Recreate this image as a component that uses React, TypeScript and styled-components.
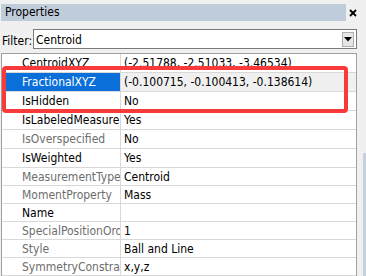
import React from 'react'
import styled, { createGlobalStyle } from 'styled-components'

type Prop = {
  name: string
  value: string
  muted?: boolean
  selected?: boolean
}

const props: Prop[] = [
  { name: 'CentroidXYZ', value: '(-2.51788, -2.51033, -3.46534)' },
  { name: 'FractionalXYZ', value: '(-0.100715, -0.100413, -0.138614)', selected: true },
  { name: 'IsHidden', value: 'No' },
  { name: 'IsLabeledMeasure', value: 'Yes' },
  { name: 'IsOverspecified', value: 'No', muted: true },
  { name: 'IsWeighted', value: 'Yes' },
  { name: 'MeasurementType', value: 'Centroid', muted: true },
  { name: 'MomentProperty', value: 'Mass', muted: true },
  { name: 'Name', value: '' },
  { name: 'SpecialPositionOrder', value: '1', muted: true },
  { name: 'Style', value: 'Ball and Line', muted: true },
  { name: 'SymmetryConstraint', value: 'x,y,z', muted: true },
]

export default function App() {
  return (
    <>
      <GlobalStyle />
      <Window>
        <Panel>
          <TitleBar>
            <TitleText>Properties</TitleText>
            <CloseButton aria-label="close">
              <svg width="8" height="8" viewBox="0 0 8 8">
                <path d="M1 1 L7 7 M7 1 L1 7" stroke="#000" strokeWidth="1.8" />
              </svg>
            </CloseButton>
          </TitleBar>

          <FilterRow>
            <FilterLabel>Filter:</FilterLabel>
            <Combo>
              <ComboText>Centroid</ComboText>
              <DropButton>
                <svg width="8" height="5" viewBox="0 0 8 5">
                  <path d="M0 0 H8 L4 4.5 Z" fill="#000" />
                </svg>
              </DropButton>
            </Combo>
          </FilterRow>

          <Grid>
            {props.map((p, i) => (
              <Row key={p.name} $h={i < 6 ? 19 : 18}>
                <NameCell $muted={p.muted} $selected={p.selected}>
                  {p.name}
                </NameCell>
                <ValueCell $selected={p.selected}>{p.value}</ValueCell>
              </Row>
            ))}
            <Highlight />
          </Grid>
        </Panel>
        <SideStrip>
          <SideBlock />
        </SideStrip>
      </Window>
    </>
  )
}

const GlobalStyle = createGlobalStyle`
  html, body {
    margin: 0;
    padding: 0;
    background: #f0f0f0;
    font-family: "DejaVu Sans Condensed", "DejaVu Sans", "Liberation Sans", sans-serif;
    font-size: 12px;
    color: #000;
  }
`
const Window = styled.div`
  display: flex;
  width: 366px;
  height: 276px;
  overflow: hidden;
`
const Panel = styled.div`
  display: flex;
  flex-direction: column;
  width: 360px;
`
const TitleBar = styled.div`
  display: flex;
  align-items: center;
  margin-top: 4px;
  height: 17px;
`
const TitleText = styled.div`
  flex: 1;
  height: 17px;
  line-height: 17px;
  margin-left: 1px;
  padding-left: 4px;
  background: #bfcddb;
  font-size: 12px;
`
const CloseButton = styled.div`
  display: flex;
  align-items: center;
  justify-content: center;
  width: 14px;
  height: 17px;
`
const FilterRow = styled.div`
  display: flex;
  align-items: center;
  margin-top: 8px;
  height: 20px;
  padding-right: 3px;
`
const FilterLabel = styled.div`
  width: 31px;
  padding-left: 2px;
  padding-top: 3px;
`
const Combo = styled.div`
  flex: 1;
  display: flex;
  align-items: center;
  height: 20px;
  box-sizing: border-box;
  border: 1px solid #7a7a7a;
  background: #fff;
  padding: 0 2px 0 2px;
`
const ComboText = styled.div`
  flex: 1;
  padding-top: 1px;
`
const DropButton = styled.div`
  display: flex;
  align-items: center;
  justify-content: center;
  width: 12px;
  height: 15px;
  box-sizing: border-box;
  border: 1px solid #adadad;
  background: #e5e5e5;
`
const Grid = styled.div`
  position: relative;
  margin: 4px 3px 0 1px;
  border: 1px solid #a0a0a0;
  border-bottom: none;
  background: #fff;
`
const Row = styled.div<{ $h: number }>`
  display: grid;
  grid-template-columns: 119px 1fr;
  height: ${({ $h }) => $h}px;
  box-sizing: border-box;
  border-bottom: 1px solid #d9d9d9;
`
const NameCell = styled.div<{ $muted?: boolean; $selected?: boolean }>`
  display: flex;
  align-items: center;
  padding-left: 20px;
  border-right: 1px solid #d9d9d9;
  overflow: hidden;
  white-space: nowrap;
  background: ${({ $selected }) => ($selected ? '#0a6fd8' : '#fff')};
  color: ${({ $muted, $selected }) => ($selected ? '#fff' : $muted ? '#6d6d6d' : '#000')};
`
const ValueCell = styled.div<{ $selected?: boolean }>`
  display: flex;
  align-items: center;
  padding-left: 3px;
  overflow: hidden;
  white-space: nowrap;
  background: ${({ $selected }) => ($selected ? '#f0f0f0' : '#fff')};
`
const Highlight = styled.div`
  position: absolute;
  top: 12px;
  left: 0;
  width: 346px;
  height: 47px;
  box-sizing: border-box;
  border: 4px solid #f83a3a;
  border-radius: 4px;
  pointer-events: none;
`
const SideStrip = styled.div`
  flex: 1;
  display: flex;
  flex-direction: column;
  padding-top: 153px;
`
const SideBlock = styled.div`
  flex: 1;
  margin-left: 3px;
  background: #c5d1dd;
`
